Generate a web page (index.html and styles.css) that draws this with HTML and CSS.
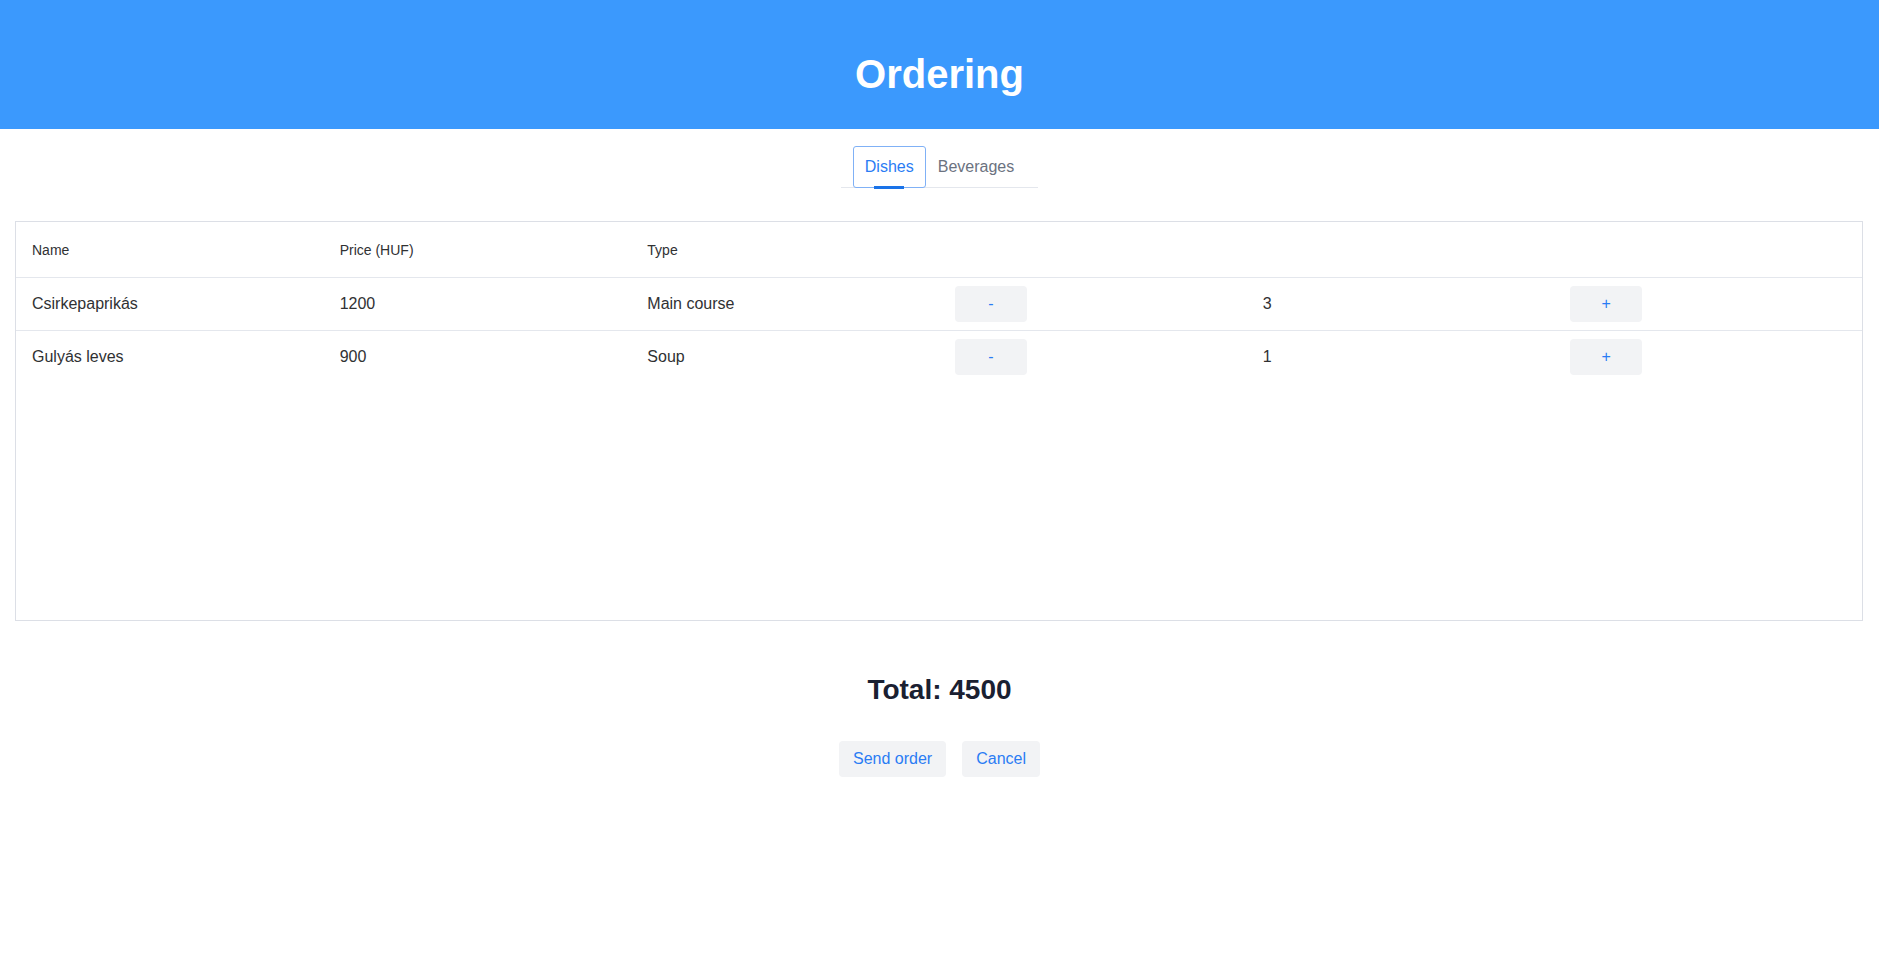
FILE: index.html
```html
<!DOCTYPE html>
<html lang="en">
<head>
<meta charset="utf-8">
<title>Ordering</title>
<link rel="stylesheet" href="styles.css">
</head>
<body>
<header class="app-header">
  <h1 class="app-title">Ordering</h1>
</header>
<nav class="tabs">
  <div class="tab-list">
    <button class="tab tab-active">Dishes</button>
    <button class="tab">Beverages</button>
  </div>
</nav>
<section class="table-wrap">
  <table class="order-table">
    <thead>
      <tr>
        <th>Name</th>
        <th>Price (HUF)</th>
        <th>Type</th>
        <th></th>
        <th></th>
        <th></th>
      </tr>
    </thead>
    <tbody>
      <tr>
        <td>Csirkepaprikás</td>
        <td>1200</td>
        <td>Main course</td>
        <td><button class="btn btn-step">-</button></td>
        <td>3</td>
        <td><button class="btn btn-step">+</button></td>
      </tr>
      <tr class="last-row">
        <td>Gulyás leves</td>
        <td>900</td>
        <td>Soup</td>
        <td><button class="btn btn-step">-</button></td>
        <td>1</td>
        <td><button class="btn btn-step">+</button></td>
      </tr>
    </tbody>
  </table>
</section>
<h2 class="total">Total: 4500</h2>
<div class="actions">
  <button class="btn btn-action">Send order</button>
  <button class="btn btn-action">Cancel</button>
</div>
</body>
</html>
```

FILE: styles.css
```css
* { box-sizing: border-box; }
html, body {
  margin: 0;
  padding: 0;
  background: #ffffff;
  font-family: "Liberation Sans", Arial, sans-serif;
  color: #303133;
}

.app-header {
  background: #3b99fd;
  padding: 50px 0 31px;
  text-align: center;
}
.app-title {
  margin: 0;
  font-size: 40px;
  line-height: 48px;
  font-weight: 700;
  color: #ffffff;
}

.tabs {
  display: flex;
  justify-content: center;
  margin-top: 17px;
}
.tab-list {
  display: flex;
  align-items: flex-start;
  padding: 0 12px;
  border-bottom: 1px solid #e4e7ed;
}
.tab {
  position: relative;
  font-family: inherit;
  font-size: 16px;
  line-height: 24px;
  padding: 8px 11px;
  margin-bottom: -1px;
  border: 1px solid transparent;
  border-radius: 3px;
  background: transparent;
  color: #6b7280;
  cursor: pointer;
}
.tab-active {
  color: #2a7cf4;
  border-color: #80b1f6;
}
.tab-active::after {
  content: "";
  position: absolute;
  left: 50%;
  bottom: -2px;
  width: 30px;
  margin-left: -15px;
  height: 3px;
  background: #1a73e8;
}

.table-wrap {
  margin: 33px 16px 0 15px;
  height: 400px;
  border: 1px solid #dcdfe6;
}
.order-table {
  width: 100%;
  table-layout: fixed;
  border-collapse: collapse;
}
.order-table th {
  text-align: left;
  font-weight: 400;
  font-size: 14px;
  line-height: 24px;
  padding: 16px 16px 15px;
  color: #303133;
  border-bottom: 1px solid #e4e7ed;
}
.order-table td {
  text-align: left;
  font-size: 16px;
  line-height: 36px;
  padding: 8px 16px;
  color: #303133;
  border-bottom: 1px solid #e4e7ed;
}
.order-table .last-row td {
  border-bottom: none;
}

.btn {
  font-family: inherit;
  border: none;
  border-radius: 4px;
  background: #f2f3f5;
  color: #2a7cf4;
  font-size: 16px;
  height: 36px;
  line-height: 36px;
  cursor: pointer;
}
.btn-step {
  display: block;
  width: 72px;
  padding: 0;
}

.total {
  margin: 52px 0 0;
  text-align: center;
  font-size: 28px;
  line-height: 34px;
  font-weight: 700;
  color: #1a2031;
}

.actions {
  display: flex;
  justify-content: center;
  gap: 16px;
  margin-top: 34px;
}
.btn-action {
  padding: 0 14px;
}
```
